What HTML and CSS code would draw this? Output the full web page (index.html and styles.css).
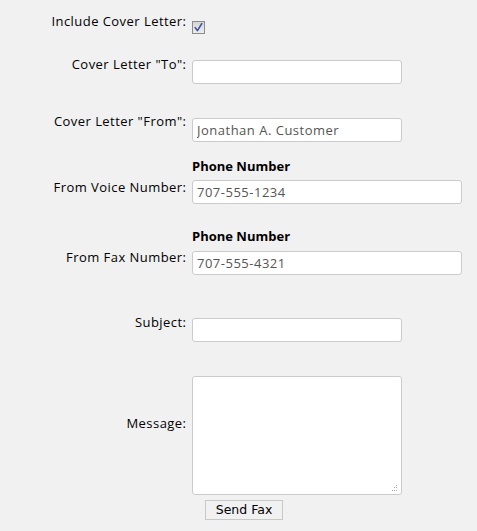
FILE: index.html
```html
<!DOCTYPE html>
<html>
<head>
<meta charset="utf-8">
<link rel="stylesheet" href="styles.css">
</head>
<body>
<form class="fax-form">
  <div class="row row-check">
    <label class="lbl">Include Cover Letter:</label>
    <div class="ctl">
      <span class="checkbox"><svg width="11" height="11" viewBox="0 0 11 11"><path d="M2.2 5.6 L4.4 8.6 L8.8 1.6" fill="none" stroke="#3a4fa0" stroke-width="1.6" stroke-linejoin="round" stroke-linecap="round"/></svg></span>
    </div>
  </div>
  <div class="row row-to">
    <label class="lbl">Cover Letter "To":</label>
    <div class="ctl"><input class="txt" type="text" value=""></div>
  </div>
  <div class="row row-from">
    <label class="lbl">Cover Letter "From":</label>
    <div class="ctl"><input class="txt" type="text" value="Jonathan A. Customer"></div>
  </div>
  <div class="row row-voice">
    <label class="lbl lbl-phone">From Voice Number:</label>
    <div class="ctl">
      <div class="head">Phone Number</div>
      <input class="txt wide" type="text" value="707-555-1234">
    </div>
  </div>
  <div class="row row-fax">
    <label class="lbl lbl-phone">From Fax Number:</label>
    <div class="ctl">
      <div class="head">Phone Number</div>
      <input class="txt wide" type="text" value="707-555-4321">
    </div>
  </div>
  <div class="row row-subject">
    <label class="lbl">Subject:</label>
    <div class="ctl"><input class="txt" type="text" value=""></div>
  </div>
  <div class="row row-msg">
    <label class="lbl lbl-msg">Message:</label>
    <div class="ctl">
      <div class="area-wrap">
        <textarea class="area"></textarea>
        <svg class="grip" width="7" height="7" viewBox="0 0 7 7"><g fill="#a8a8a8"><rect x="5" y="0" width="1" height="1"/><rect x="3" y="2" width="1" height="1"/><rect x="5" y="2" width="1" height="1"/><rect x="1" y="5" width="1" height="1"/><rect x="3" y="5" width="1" height="1"/><rect x="5" y="5" width="1" height="1"/></g></svg>
      </div>
    </div>
  </div>
  <div class="row row-btn">
    <div></div>
    <div class="ctl"><button class="btn" type="button">Send Fax</button></div>
  </div>
</form>
</body>
</html>
```
FILE: styles.css
```css
html, body {
  margin: 0;
  padding: 0;
  background: #f1f1f1;
}
body {
  font-family: "Open Sans", Lato, sans-serif;
  font-size: 13px;
  line-height: 16px;
  color: #000;
}
.fax-form {
  display: flex;
  flex-direction: column;
}
.row {
  display: grid;
  grid-template-columns: 186px 1fr;
  column-gap: 6px;
  align-items: start;
}
.lbl {
  text-align: right;
  white-space: nowrap;
  letter-spacing: 0.45px;
  margin-right: -0.45px;
}
.ctl {
  display: flex;
  flex-direction: column;
  align-items: flex-start;
}
.row-check { margin-top: 13px; }
.row-check .ctl { padding-top: 8px; }
.checkbox {
  display: flex;
  align-items: center;
  justify-content: center;
  width: 11px;
  height: 11px;
  border: 1px solid #8c8c8c;
  background: linear-gradient(#d6d6d6, #ececec);
}
.row-to { margin-top: 22px; }
.row-to .ctl { padding-top: 4px; }
.row-from { margin-top: 29px; }
.row-from .ctl { padding-top: 5px; }
.row-voice { margin-top: 16px; }
.row-fax { margin-top: 24px; }
.lbl-phone { margin-top: 21px; }
.head {
  font-weight: bold;
  color: #000;
  height: 16px;
  margin-bottom: 6px;
}
.row-fax .head { margin-bottom: 7px; }
.row-subject { margin-top: 39px; }
.row-subject .ctl { padding-top: 4px; }
.row-msg { margin-top: 34px; }
.lbl-msg { margin-top: 39px; }
.row-btn { margin-top: 5px; }
.txt {
  box-sizing: border-box;
  width: 210px;
  height: 24px;
  margin: 0;
  padding: 0 4px;
  border: 1px solid #cbcbcb;
  border-radius: 3px;
  background: #fff;
  font-family: "Open Sans", Lato, sans-serif;
  font-size: 13px;
  letter-spacing: 0.5px;
  color: #555;
  outline: none;
}
.txt.wide { width: 270px; }
.area-wrap {
  position: relative;
  width: 210px;
  height: 119px;
}
.area {
  box-sizing: border-box;
  width: 210px;
  height: 119px;
  margin: 0;
  padding: 4px;
  border: 1px solid #cbcbcb;
  border-radius: 3px;
  background: #fff;
  display: block;
  resize: none;
  font-family: "Open Sans", sans-serif;
  font-size: 13px;
}
.grip {
  position: absolute;
  right: 4px;
  bottom: 3px;
}
.btn {
  box-sizing: border-box;
  margin: 0 0 0 13px;
  width: 78px;
  height: 20px;
  padding: 0;
  border: 1px solid #c8c8c8;
  border-radius: 0;
  background: #f1f1f1;
  font-family: "DejaVu Sans", Verdana, sans-serif;
  font-size: 12.5px;
  line-height: 18px;
  color: #000;
}
```
